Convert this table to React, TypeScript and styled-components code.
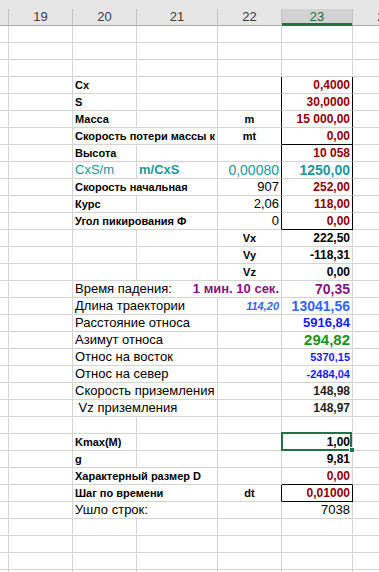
import React from "react";
import styled, { createGlobalStyle, css } from "styled-components";

const GRID = "#d4d4d4";
const BOX = "#000000";
const INK = "#000000";
const RED = "#900000";
const TEAL = "#2396a0";
const PURPLE = "#87127f";
const SKY = "#3366ff";
const BLUE = "#1a1aff";
const GREEN = "#1f8f1f";
const EXCEL = "#217346";

const COLUMNS = "9px 64px 64px 81px 64px 71px 64px";

const GlobalStyle = createGlobalStyle`
  html, body {
    margin: 0;
    padding: 0;
    background: #ffffff;
  }
  body {
    font-family: "Liberation Sans", Arial, sans-serif;
  }
`;

const Viewport = styled.div`
  width: 379px;
  height: 572px;
  overflow: hidden;
  background: #ffffff;
`;

const Sheet = styled.div`
  width: 417px;
`;

const HeaderBar = styled.div`
  display: grid;
  grid-template-columns: ${COLUMNS};
  height: 26px;
  box-sizing: border-box;
  padding-top: 9px;
  background: #e6e6e6;
`;

const ColumnHead = styled.div<{ $active?: boolean }>`
  box-sizing: border-box;
  height: 17px;
  border-right: 1px solid #c3c3c3;
  border-bottom: 1px solid #ababab;
  font-size: 13px;
  line-height: 16px;
  text-align: center;
  color: #3c3c3c;
  overflow: hidden;
  white-space: nowrap;
  ${(p) =>
    p.$active &&
    css`
      background: #d2d2d2;
      color: #1e6a40;
      border-bottom-color: ${EXCEL};
      box-shadow: inset 0 -2px 0 ${EXCEL};
    `}
`;

const RowGrid = styled.div`
  display: grid;
  grid-template-columns: ${COLUMNS};
  height: 17px;
`;

type Align = "left" | "right" | "center" | "between";

const justify: Record<Align, string> = {
  left: "flex-start",
  right: "flex-end",
  center: "center",
  between: "space-between",
};

const Cell = styled.div<{
  $span?: number;
  $align?: Align;
  $edgeRight?: string;
  $edgeBottom?: string;
  $selected?: boolean;
}>`
  grid-column: span ${(p) => p.$span ?? 1};
  box-sizing: border-box;
  height: 17px;
  padding: 0 2px;
  border-right: 1px solid ${(p) => p.$edgeRight ?? GRID};
  border-bottom: 1px solid ${(p) => p.$edgeBottom ?? GRID};
  display: flex;
  align-items: flex-start;
  justify-content: ${(p) => justify[p.$align ?? "left"]};
  line-height: 16px;
  white-space: pre;
  overflow: hidden;
  ${(p) =>
    p.$selected &&
    css`
      position: relative;
      overflow: visible;
    `}
`;

const SelectionFrame = styled.span`
  position: absolute;
  top: -2px;
  left: -1px;
  right: 0;
  bottom: -1px;
  border: 2px solid ${EXCEL};
  z-index: 1;
  pointer-events: none;
`;

const FillHandle = styled.span`
  position: absolute;
  right: -3px;
  bottom: -3px;
  width: 6px;
  height: 6px;
  box-sizing: border-box;
  background: ${EXCEL};
  border: 1px solid #ffffff;
  z-index: 2;
`;

const Label = styled.span<{ $tone?: string; $size?: number }>`
  font-weight: 700;
  font-size: ${(p) => p.$size ?? 11}px;
  color: ${(p) => p.$tone ?? INK};
`;

const Caption = styled.span<{ $tone?: string; $size?: number }>`
  font-weight: 400;
  font-size: ${(p) => p.$size ?? 13}px;
  color: ${(p) => p.$tone ?? INK};
`;

const Figure = styled.span<{ $tone?: string; $size?: number; $italic?: boolean }>`
  font-weight: 700;
  font-size: ${(p) => p.$size ?? 12}px;
  font-style: ${(p) => (p.$italic ? "italic" : "normal")};
  color: ${(p) => p.$tone ?? INK};
`;

function Row({ children }: { children?: React.ReactNode }) {
  return (
    <RowGrid>
      <Cell />
      <Cell />
      {children ?? (
        <>
          <Cell />
          <Cell />
          <Cell />
          <Cell />
        </>
      )}
      <Cell />
    </RowGrid>
  );
}

const heads = ["", "19", "20", "21", "22", "23", "24"];

export default function App() {
  return (
    <Viewport>
      <GlobalStyle />
      <Sheet>
        <HeaderBar>
          {heads.map((h, i) => (
            <ColumnHead key={i} $active={h === "23"}>
              {h}
            </ColumnHead>
          ))}
        </HeaderBar>

        <Row />
        <Row />
        <Row />

        <Row>
          <Cell><Label>Cx</Label></Cell>
          <Cell />
          <Cell $edgeRight={BOX} />
          <Cell $align="right" $edgeRight={BOX}><Figure $tone={RED}>0,4000</Figure></Cell>
        </Row>
        <Row>
          <Cell><Label>S</Label></Cell>
          <Cell />
          <Cell $edgeRight={BOX} />
          <Cell $align="right" $edgeRight={BOX}><Figure $tone={RED}>30,0000</Figure></Cell>
        </Row>
        <Row>
          <Cell><Label>Масса</Label></Cell>
          <Cell />
          <Cell $align="center" $edgeRight={BOX}><Label>m</Label></Cell>
          <Cell $align="right" $edgeRight={BOX}><Figure $tone={RED}>15 000,00</Figure></Cell>
        </Row>
        <Row>
          <Cell $span={2}><Label>Скорость потери массы к</Label></Cell>
          <Cell $align="center" $edgeRight={BOX}><Label>mt</Label></Cell>
          <Cell $align="right" $edgeRight={BOX} $edgeBottom={BOX}><Figure $tone={RED}>0,00</Figure></Cell>
        </Row>
        <Row>
          <Cell><Label>Высота</Label></Cell>
          <Cell />
          <Cell $edgeRight={BOX} />
          <Cell $align="right" $edgeRight={BOX}><Figure $tone={RED}>10 058</Figure></Cell>
        </Row>
        <Row>
          <Cell><Caption $tone={TEAL}>CxS/m</Caption></Cell>
          <Cell><Label $tone={TEAL} $size={13}>m/CxS</Label></Cell>
          <Cell $align="right" $edgeRight={BOX}><Caption $tone={TEAL} $size={14}>0,00080</Caption></Cell>
          <Cell $align="right" $edgeRight={BOX}><Figure $tone={TEAL} $size={14}>1250,00</Figure></Cell>
        </Row>
        <Row>
          <Cell $span={2}><Label>Скорость начальная</Label></Cell>
          <Cell $align="right" $edgeRight={BOX}><Caption>907</Caption></Cell>
          <Cell $align="right" $edgeRight={BOX}><Figure $tone={RED}>252,00</Figure></Cell>
        </Row>
        <Row>
          <Cell><Label>Курс</Label></Cell>
          <Cell />
          <Cell $align="right" $edgeRight={BOX}><Caption>2,06</Caption></Cell>
          <Cell $align="right" $edgeRight={BOX}><Figure $tone={RED}>118,00</Figure></Cell>
        </Row>
        <Row>
          <Cell $span={2}><Label>Угол пикирования Ф</Label></Cell>
          <Cell $align="right" $edgeRight={BOX}><Caption>0</Caption></Cell>
          <Cell $align="right" $edgeRight={BOX} $edgeBottom={BOX}><Figure $tone={RED}>0,00</Figure></Cell>
        </Row>

        <Row>
          <Cell />
          <Cell />
          <Cell $align="center"><Label>Vx</Label></Cell>
          <Cell $align="right"><Figure>222,50</Figure></Cell>
        </Row>
        <Row>
          <Cell />
          <Cell />
          <Cell $align="center"><Label>Vy</Label></Cell>
          <Cell $align="right"><Figure>-118,31</Figure></Cell>
        </Row>
        <Row>
          <Cell />
          <Cell />
          <Cell $align="center"><Label>Vz</Label></Cell>
          <Cell $align="right"><Figure>0,00</Figure></Cell>
        </Row>

        <Row>
          <Cell $span={3} $align="between">
            <Caption>Время падения:</Caption>
            <Figure $tone={PURPLE} $size={13}>1 мин. 10 сек.</Figure>
          </Cell>
          <Cell $align="right"><Figure $tone={PURPLE} $size={14}>70,35</Figure></Cell>
        </Row>
        <Row>
          <Cell $span={2}><Caption>Длина траектории</Caption></Cell>
          <Cell $align="right"><Figure $tone={SKY} $size={11} $italic>114,20</Figure></Cell>
          <Cell $align="right"><Figure $tone={SKY} $size={14}>13041,56</Figure></Cell>
        </Row>
        <Row>
          <Cell $span={2}><Caption>Расстояние относа</Caption></Cell>
          <Cell />
          <Cell $align="right"><Figure $tone={BLUE} $size={13}>5916,84</Figure></Cell>
        </Row>
        <Row>
          <Cell $span={2}><Caption>Азимут относа</Caption></Cell>
          <Cell />
          <Cell $align="right"><Figure $tone={GREEN} $size={15}>294,82</Figure></Cell>
        </Row>
        <Row>
          <Cell $span={2}><Caption>Относ на восток</Caption></Cell>
          <Cell />
          <Cell $align="right"><Figure $tone={BLUE} $size={11}>5370,15</Figure></Cell>
        </Row>
        <Row>
          <Cell $span={2}><Caption>Относ на север</Caption></Cell>
          <Cell />
          <Cell $align="right"><Figure $tone={BLUE} $size={11}>-2484,04</Figure></Cell>
        </Row>
        <Row>
          <Cell $span={2}><Caption>Скорость приземления</Caption></Cell>
          <Cell />
          <Cell $align="right"><Figure $tone="#222222">148,98</Figure></Cell>
        </Row>
        <Row>
          <Cell $span={2}><Caption> Vz приземления</Caption></Cell>
          <Cell />
          <Cell $align="right"><Figure $tone="#222222">148,97</Figure></Cell>
        </Row>

        <Row />

        <Row>
          <Cell><Label>Kmax(M)</Label></Cell>
          <Cell />
          <Cell />
          <Cell $align="right" $selected>
            <Figure>1,00</Figure>
            <SelectionFrame />
            <FillHandle />
          </Cell>
        </Row>
        <Row>
          <Cell><Label>g</Label></Cell>
          <Cell />
          <Cell />
          <Cell $align="right"><Figure>9,81</Figure></Cell>
        </Row>
        <Row>
          <Cell $span={2}><Label>Характерный размер D</Label></Cell>
          <Cell />
          <Cell $align="right" $edgeBottom={BOX}><Figure $tone={RED}>0,00</Figure></Cell>
        </Row>
        <Row>
          <Cell $span={2}><Label>Шаг по времени</Label></Cell>
          <Cell $align="center" $edgeRight={BOX}><Label>dt</Label></Cell>
          <Cell $align="right" $edgeRight={BOX} $edgeBottom={BOX}><Figure $tone={RED}>0,01000</Figure></Cell>
        </Row>
        <Row>
          <Cell $span={2}><Caption>Ушло строк:</Caption></Cell>
          <Cell />
          <Cell $align="right"><Caption>7038</Caption></Cell>
        </Row>

        <Row />
        <Row />
        <Row />
        <Row />
      </Sheet>
    </Viewport>
  );
}
